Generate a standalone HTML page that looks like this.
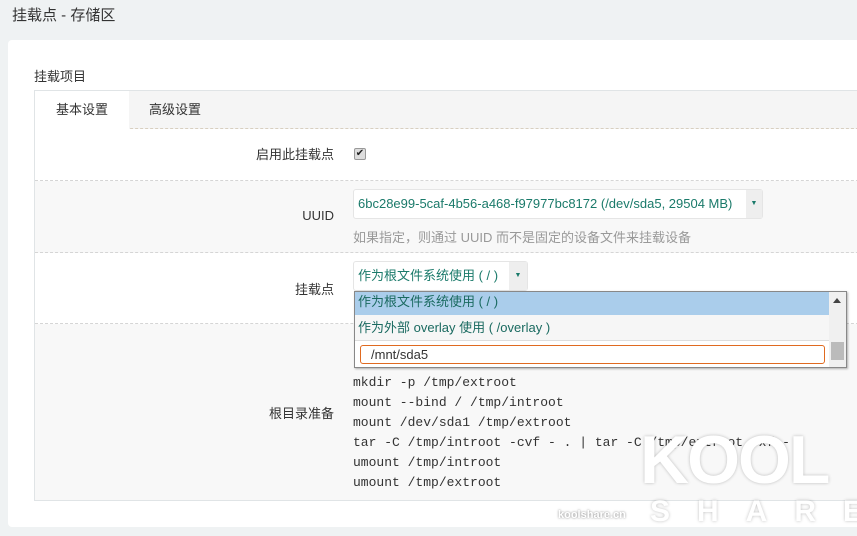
<!DOCTYPE html>
<html><head><meta charset="utf-8"><style>
*{margin:0;padding:0;box-sizing:border-box}
body{width:857px;height:536px;overflow:hidden;background:#eff2f3;font-family:"Liberation Sans","Noto Sans CJK SC",sans-serif;font-size:13px;color:#333;position:relative}
.title{position:absolute;left:12px;top:4px;font-size:15px;color:#333}
.card{position:absolute;left:8px;top:40px;width:900px;height:487px;background:#fff;border-radius:4px}
.legend{position:absolute;left:34px;top:66px;font-size:13px}
.box{position:absolute;left:34px;top:90px;width:900px;height:411px;border:1px solid #e0e4e6;border-right:none;background:#f8f8f8}
.tabs{position:absolute;left:0;top:0;width:100%;height:38px;background:#f5f5f5;border-bottom:1px dashed #d8cfc0}
.tab{position:absolute;top:0;height:38px;line-height:38px;font-size:13px}
.row{position:absolute;left:0;width:100%;border-bottom:1px dashed #d5d5d5}
.lbl2{position:absolute;left:0;width:299px;text-align:right}
.sel{position:absolute;background:#fff;border:1px solid #e5e5e5;border-radius:3px;color:#1a7a6a;height:30px;line-height:28px;font-size:13px;padding-left:4px}
.sel .ar{position:absolute;right:0;top:0;width:16px;height:28px;background:#eee;font-size:7px;text-align:center;color:#1a7a6a}
pre{font-family:"Liberation Mono",monospace;font-size:13px;line-height:20px;color:#333}
</style></head><body>
<div class="title">挂载点 - 存储区</div>
<div class="card"></div>
<div class="legend">挂载项目</div>
<div class="box">
 <div class="tabs">
  <div class="tab" style="left:0;width:94px;background:#fff;text-align:center">基本设置</div>
  <div class="tab" style="left:114px">高级设置</div>
 </div>
 <div class="row" style="top:38px;height:52px;background:#fff">
  <div class="lbl2" style="top:15px">启用此挂载点</div>
  <div style="position:absolute;left:319px;top:19px;width:12px;height:12px;border:1px solid #999;background:#ddd;border-radius:2px;font-size:10px;line-height:10px;text-align:center;color:#222">✔</div>
 </div>
 <div class="row" style="top:90px;height:72px">
  <div class="lbl2" style="top:27px">UUID</div>
  <div class="sel" style="left:318px;top:8px;width:410px">6bc28e99-5caf-4b56-a468-f97977bc8172 (/dev/sda5, 29504 MB)<span class="ar">▼</span></div>
  <div style="position:absolute;left:318px;top:46px;color:#999;font-size:13px">如果指定，则通过 UUID 而不是固定的设备文件来挂载设备</div>
 </div>
 <div class="row" style="top:162px;height:71px;background:#fff">
  <div class="lbl2" style="top:26px">挂载点</div>
  <div class="sel" style="left:318px;top:8px;width:175px">作为根文件系统使用 ( / )<span class="ar" style="width:18px;line-height:28px">▼</span></div>
 </div>
 <div style="position:absolute;left:318px;top:282px">
<pre>mkdir -p /tmp/extroot
mount --bind / /tmp/introot
mount /dev/sda1 /tmp/extroot
tar -C /tmp/introot -cvf - . | tar -C /tmp/extroot -xf -
umount /tmp/introot
umount /tmp/extroot</pre></div>
 <div class="lbl2" style="top:312px">根目录准备</div>
</div>
<div style="position:absolute;left:354px;top:291px;width:493px;height:77px;background:#fff;border:1px solid #888;box-shadow:1px 1px 2px rgba(0,0,0,.3)">
 <div style="position:absolute;left:0;top:0;width:474px;height:23px;background:#aacdeb;color:#1a6a60;line-height:20px;padding-left:3px">作为根文件系统使用 ( / )</div>
 <div style="position:absolute;left:0;top:23px;width:474px;height:26px;background:#f6f6f6;color:#1a6a60;line-height:26px;padding-left:3px;border-bottom:1px solid #ddd">作为外部 overlay 使用 ( /overlay )</div>
 <div style="position:absolute;left:5px;top:53px;width:465px;height:19px;border:1px solid #e06a20;border-radius:3px;line-height:17px;padding-left:10px">/mnt/sda5</div>
 <div style="position:absolute;right:0;top:0;width:17px;height:75px;background:#f0f0f0"></div>
 <div style="position:absolute;right:5px;top:6px;border:4px solid transparent;border-bottom:5px solid #444;border-top:none"></div>
 <div style="position:absolute;right:2px;top:50px;width:13px;height:18px;background:#bbb"></div>
</div>
<div style="position:absolute;left:640px;top:425px;font-size:68px;font-weight:bold;color:#fff;letter-spacing:-2px;text-shadow:0 0 3px rgba(0,0,0,.25);font-family:'Liberation Sans',sans-serif;line-height:70px">KOOL</div>
<div style="position:absolute;left:650px;top:496px;font-size:30px;font-weight:bold;color:#fff;letter-spacing:27px;text-shadow:0 0 3px rgba(0,0,0,.25);line-height:32px">SHARE</div>
<div style="position:absolute;left:558px;top:509px;font-size:11px;font-weight:bold;color:#fff;text-shadow:0 0 2px rgba(0,0,0,.5)">koolshare.cn</div>
</body></html>
